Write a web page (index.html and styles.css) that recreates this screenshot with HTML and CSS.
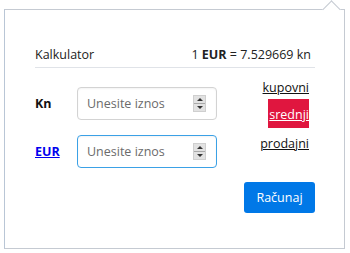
FILE: index.html
```html
<!DOCTYPE html>
<html lang="hr">
<head>
  <meta charset="utf-8" />
  <title>Kalkulator</title>
  <link rel="stylesheet" href="styles.css">
</head>
<body>
  <div class="popup">
    <div class="popup-arrow"></div>
    <div class="calc">
      <div class="calc-header">
        <span>Kalkulator</span>
        <span>1 <b>EUR</b> = 7.529669 kn</span>
      </div>
      <div class="calc-body">
        <div class="calc-rows">
          <div class="calc-row">
            <span class="calc-label">Kn</span>
            <div class="amount">
              <span class="amount-placeholder">Unesite iznos</span>
              <span class="spinner"><span class="spin-up"></span><span class="spin-down"></span></span>
            </div>
          </div>
          <div class="calc-row">
            <a href="#" class="calc-label calc-label-link">EUR</a>
            <div class="amount amount-focus">
              <span class="amount-placeholder">Unesite iznos</span>
              <span class="spinner"><span class="spin-up"></span><span class="spin-down"></span></span>
            </div>
          </div>
        </div>
        <div class="rate-types">
          <a href="#" class="rate">kupovni</a>
          <a href="#" class="rate rate-active">srednji</a>
          <a href="#" class="rate rate-last">prodajni</a>
        </div>
      </div>
      <div class="calc-actions">
        <button class="calc-button">Računaj</button>
      </div>
    </div>
  </div>
</body>
</html>
```

FILE: styles.css
```css
* {
  margin: 0;
  padding: 0;
  box-sizing: border-box;
}

body {
  background-color: #fff;
  font-family: "Open Sans", "Noto Sans", sans-serif;
  font-size: 12px;
  color: #222;
}

.popup {
  position: relative;
  margin: 9px 0 0 4px;
  width: 341px;
  height: 240px;
  border: 1px solid #c5cad2;
  border-left-color: #b9c6d6;
}

/* little notch at the top */
.popup-arrow {
  position: absolute;
  top: -7px;
  right: 6px;
  width: 13px;
  height: 13px;
  background: #fff;
  border-top: 1px solid #c5cad2;
  border-left: 1px solid #c5cad2;
  transform: rotate(45deg);
}

.calc {
  padding: 36px 29px 0 30px;
}

.calc-header {
  display: flex;
  justify-content: space-between;
  padding: 0 4px 3px 0;
  border-bottom: 1px solid #e0e3e8;
  font-size: 12.5px;
  line-height: 18px;
}

.calc-body {
  display: flex;
  justify-content: space-between;
  margin-top: 11px;
}

.calc-rows {
  display: flex;
  flex-direction: column;
  gap: 15px;
  padding-top: 8px;
}

.calc-row {
  display: flex;
  align-items: center;
}

.calc-label {
  width: 42px;
  font-weight: bold;
  font-size: 12.5px;
  color: #111;
}

.calc-label-link {
  color: #0000ee;
}

.amount {
  display: flex;
  align-items: center;
  justify-content: space-between;
  width: 140px;
  height: 33px;
  padding: 0 10px 0 9px;
  border: 1px solid #d3d3d3;
  border-radius: 4px;
  box-shadow: inset 0 1px 2px rgba(0, 0, 0, 0.05);
}

.amount-focus {
  border-color: #3ba1e6;
}

.amount-placeholder {
  color: #6b6b6b;
  font-size: 12.5px;
}

.spinner {
  display: flex;
  flex-direction: column;
  width: 13px;
  height: 17px;
  background: #e2e2e2;
  border: 1px solid #cfcfcf;
}

.spin-up,
.spin-down {
  flex: 1;
  display: flex;
  align-items: center;
  justify-content: center;
}

.spin-up {
  border-bottom: 1px solid #a9a9a9;
}

.spin-up::before {
  content: "";
  border-left: 3px solid transparent;
  border-right: 3px solid transparent;
  border-bottom: 3px solid #333;
}

.spin-down::before {
  content: "";
  border-left: 3px solid transparent;
  border-right: 3px solid transparent;
  border-top: 3px solid #333;
}

.rate-types {
  display: flex;
  flex-direction: column;
  align-items: flex-end;
  padding-right: 6px;
}

.rate {
  color: #111;
  font-size: 12.5px;
  line-height: 17px;
  text-decoration: underline;
}

.rate-active {
  margin-top: 3px;
  background: #e0163f;
  color: #fff;
  padding: 7px 0 5px 1px;
}

.rate-last {
  margin-top: 7px;
}

.calc-actions {
  display: flex;
  justify-content: flex-end;
  margin-top: 14px;
}

.calc-button {
  width: 71px;
  height: 31px;
  border: none;
  border-radius: 3px;
  background: #0078e7;
  color: #fff;
  font-family: "Open Sans", "Noto Sans", sans-serif;
  font-size: 12.5px;
}
```
